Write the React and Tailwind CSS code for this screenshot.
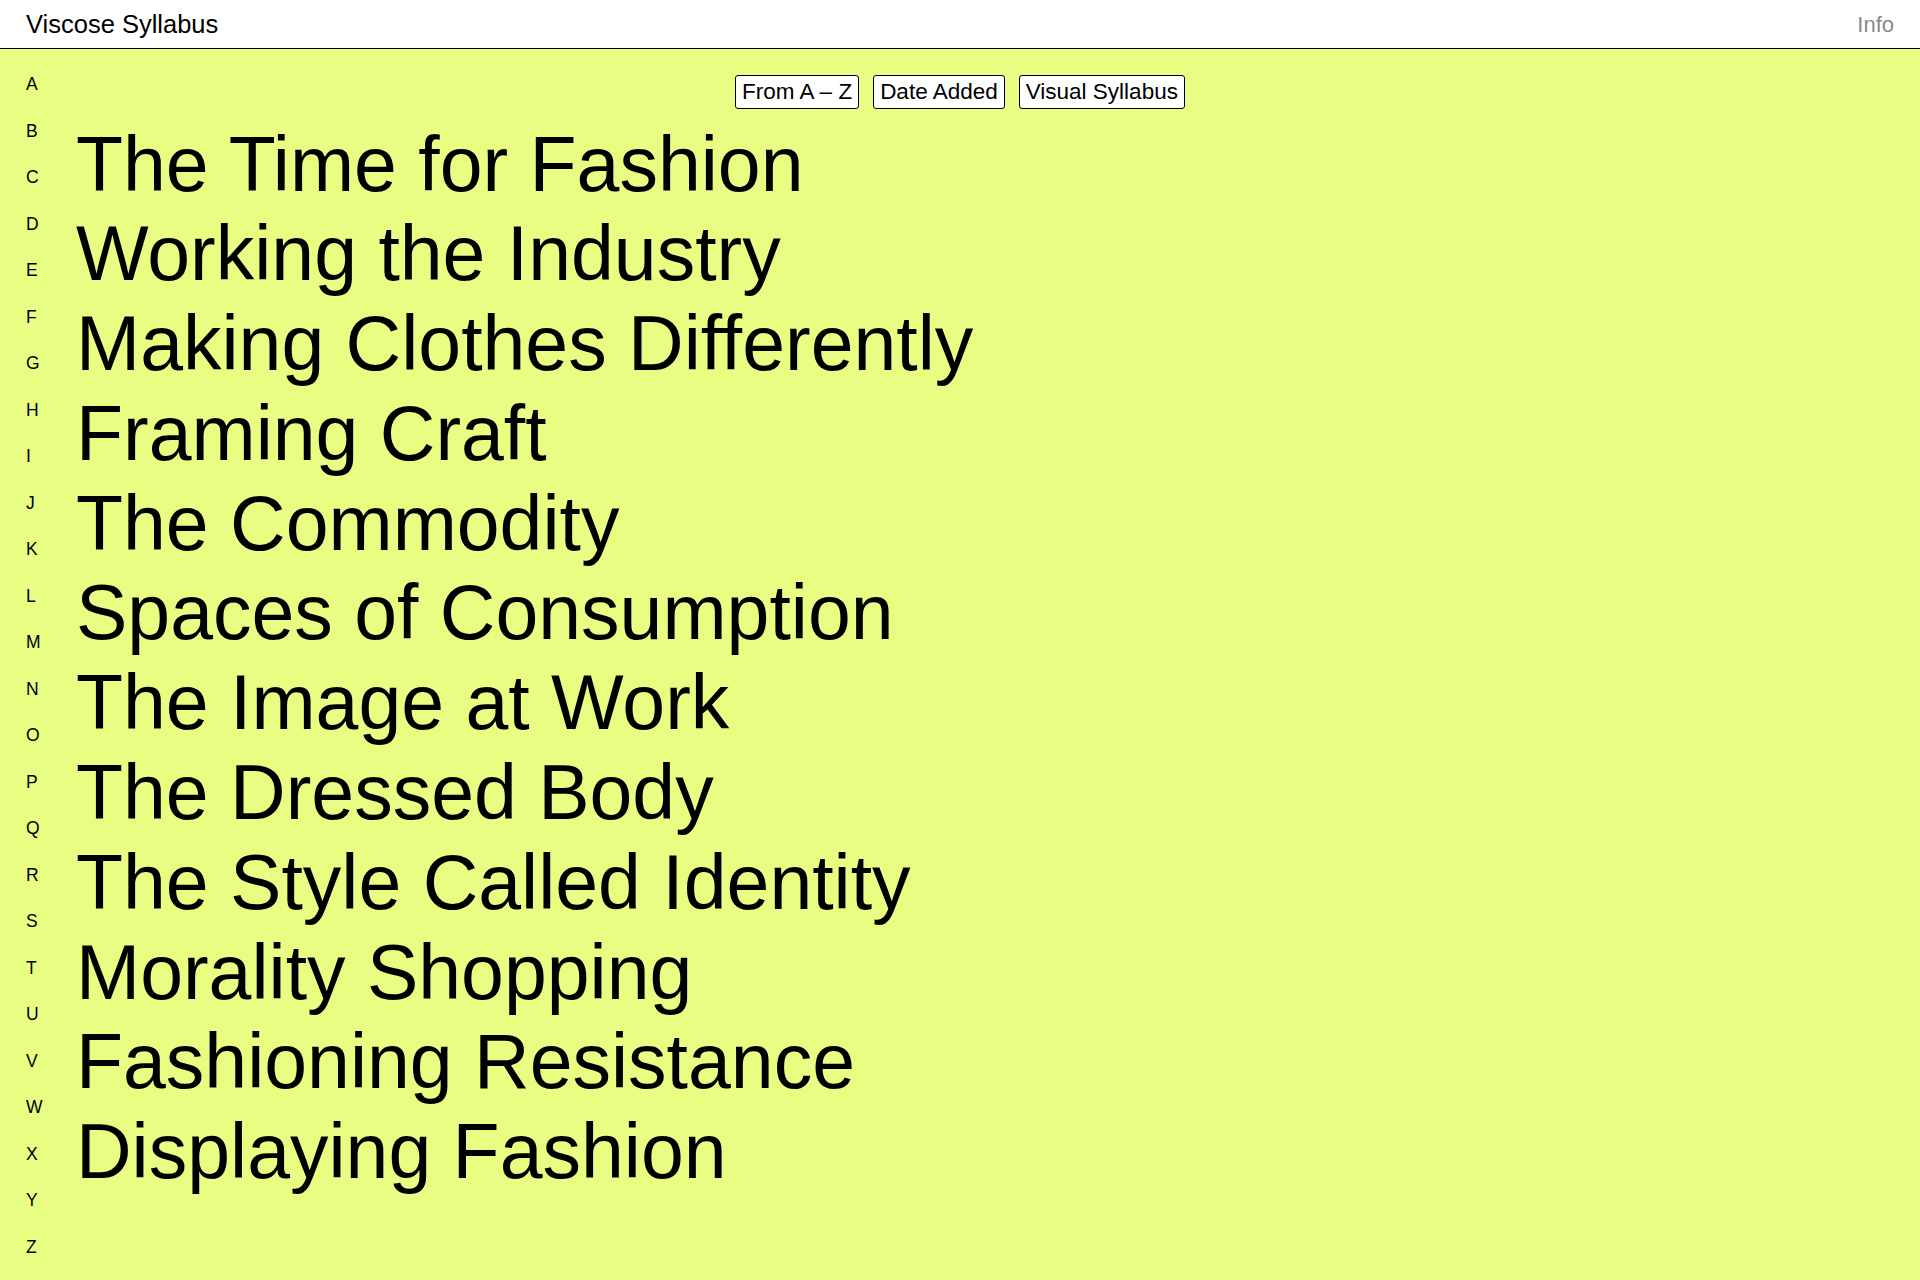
import React from 'react';

const LETTERS = 'ABCDEFGHIJKLMNOPQRSTUVWXYZ'.split('');

const TITLES = [
  'The Time for Fashion',
  'Working the Industry',
  'Making Clothes Differently',
  'Framing Craft',
  'The Commodity',
  'Spaces of Consumption',
  'The Image at Work',
  'The Dressed Body',
  'The Style Called Identity',
  'Morality Shopping',
  'Fashioning Resistance',
  'Displaying Fashion',
];

const SORTS = ['From A – Z', 'Date Added', 'Visual Syllabus'];

export default function App() {
  return (
    <div className="min-h-screen bg-[#e8fe82] text-black font-['Liberation_Sans',Arial,sans-serif]">
      {/* Top bar */}
      <header className="h-[49px] bg-white border-b-[1.5px] border-black flex items-center justify-between pl-[26px] pr-[26px]">
        <span className="text-[25.5px]">Viscose Syllabus</span>
        <span className="text-[22px] text-[#8a8a8a]">Info</span>
      </header>

      <div className="flex">
        {/* Alphabet index */}
        <nav className="w-[76px] shrink-0 pl-[26px] pt-[12px]">
          {LETTERS.map(l => (
            <div key={l} className="text-[17.5px] leading-[46.5px]">{l}</div>
          ))}
        </nav>

        <main className="flex-1 pt-[26px]">
          <div className="-ml-[76px] flex justify-center gap-[14px]">
            {SORTS.map(s => (
              <button
                key={s}
                className="h-[33.5px] px-[6px] bg-white border-[1.5px] border-black rounded-[3px] text-[22.5px] leading-none"
              >
                {s}
              </button>
            ))}
          </div>

          <ul className="mt-[11px]">
            {TITLES.map(t => (
              <li key={t} className="text-[77px] leading-[89.8px] whitespace-nowrap">{t}</li>
            ))}
          </ul>
        </main>
      </div>
    </div>
  );
}
